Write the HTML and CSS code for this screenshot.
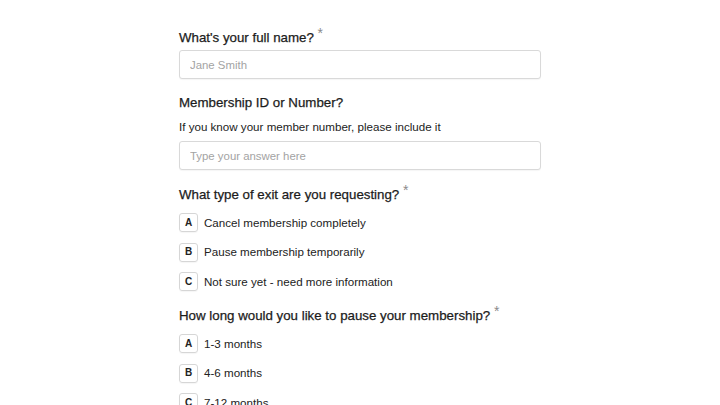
FILE: index.html
```html
<!DOCTYPE html>
<html lang="en">
<head>
    <meta charset="UTF-8">
    <meta name="viewport" content="width=device-width, initial-scale=1.0">
    <title>Membership Exit Request</title>
    <link rel="stylesheet" href="styles.css">
</head>
<body>
    <form class="form">
        <div class="question">
            <label class="q-title" for="full-name">What's your full name? <span class="req">*</span></label>
            <input id="full-name" class="text-input" type="text" placeholder="Jane Smith">
        </div>

        <div class="question">
            <label class="q-title" for="member-id">Membership ID or Number?</label>
            <p class="q-help">If you know your member number, please include it</p>
            <input id="member-id" class="text-input" type="text" placeholder="Type your answer here">
        </div>

        <div class="question">
            <div class="q-title">What type of exit are you requesting? <span class="req">*</span></div>
            <ul class="choices">
                <li class="choice"><span class="key">A</span>Cancel membership completely</li>
                <li class="choice"><span class="key">B</span>Pause membership temporarily</li>
                <li class="choice"><span class="key">C</span>Not sure yet - need more information</li>
            </ul>
        </div>

        <div class="question">
            <div class="q-title">How long would you like to pause your membership? <span class="req">*</span></div>
            <ul class="choices">
                <li class="choice"><span class="key">A</span>1-3 months</li>
                <li class="choice"><span class="key">B</span>4-6 months</li>
                <li class="choice"><span class="key">C</span>7-12 months</li>
            </ul>
        </div>
    </form>
</body>
</html>
```

FILE: styles.css
```css
body {
    margin: 0;
    background: #ffffff;
    font-family: "Liberation Sans", Arial, sans-serif;
    color: #1f1f1f;
}
.form {
    width: 362px;
    margin: 0 auto;
    padding-top: 27px;
}
.question {
    margin-bottom: 14px;
}
.q-title {
    display: block;
    font-size: 13.3px;
    line-height: 20px;
    color: #1c1c1c;
    -webkit-text-stroke: 0.25px #1c1c1c;
    margin-bottom: 2px;
}
.req {
    color: #8a8a8a;
    -webkit-text-stroke: 0;
    font-size: 14px;
    position: relative;
    top: -4px;
}
.q-help {
    margin: 5px 0 5px;
    font-size: 11.6px;
    line-height: 18px;
    color: #222;
}
.text-input {
    display: block;
    box-sizing: border-box;
    width: 100%;
    height: 29px;
    padding: 0 10px;
    border: 1px solid #d9d9d9;
    border-radius: 3px;
    box-shadow: 0 1px 1px rgba(0,0,0,0.04);
    font-family: inherit;
    font-size: 11.4px;
    color: #222;
    outline: none;
}
.text-input::placeholder {
    color: #a3a3a3;
}
.choices {
    list-style: none;
    margin: 8px 0 0;
    padding: 0;
    display: flex;
    flex-direction: column;
    gap: 10.5px;
}
.choice {
    display: flex;
    align-items: center;
    gap: 6px;
    font-size: 11.6px;
    line-height: 18px;
    color: #222;
}
.key {
    box-sizing: border-box;
    width: 19px;
    height: 19px;
    border: 1px solid #d6d6d6;
    border-radius: 3px;
    display: flex;
    align-items: center;
    justify-content: center;
    font-size: 10px;
    font-weight: bold;
    color: #222;
    box-shadow: 0 1px 1px rgba(0,0,0,0.04);
}
```
